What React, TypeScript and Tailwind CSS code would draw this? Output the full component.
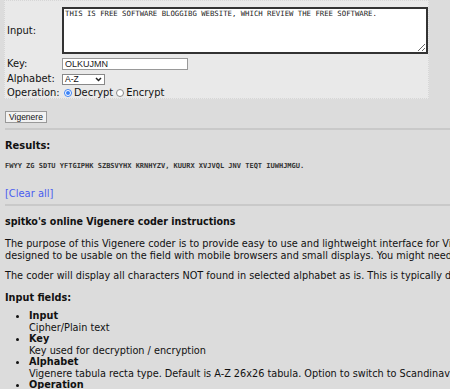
export default function App() {
  return (
    <div className="h-[389px] w-[450px] overflow-hidden bg-[#dcdcdc] text-[#111] font-['DejaVu_Sans_Condensed','DejaVu_Sans',Verdana,sans-serif] text-[10.8px] leading-[11.5px]">
      <div className="px-[4px]">
        {/* Form */}
        <div className="h-[99px] w-[425px] border border-dotted border-[#d6d6d6] bg-[#e9e9e9] pl-[2px] text-[11px] leading-[12px]">
          <div className="mt-[6px] flex items-center">
            <span className="w-[55px]">Input:</span>
            <textarea
              readOnly
              className="h-[47px] w-[366px] resize-y border-2 border-[#333] bg-white px-[1px] py-0 font-['DejaVu_Sans_Mono',monospace] text-[7.3px] leading-[9px] text-[#222] outline-none"
              defaultValue="THIS IS FREE SOFTWARE BLOGGIBG WEBSITE, WHICH REVIEW THE FREE SOFTWARE."
            />
          </div>
          <div className="mt-[4px] flex items-center">
            <span className="w-[55px]">Key:</span>
            <input
              readOnly
              defaultValue="OLKUJMN"
              className="h-[12px] w-[126px] border border-[#999] bg-white px-[2px] font-['Liberation_Sans',Arial,sans-serif] text-[9px] text-[#222] outline-none"
            />
          </div>
          <div className="mt-[3px] flex items-center">
            <span className="w-[55px]">Alphabet:</span>
            <div className="flex h-[11px] w-[43px] items-center justify-between border border-[#888] bg-white px-[2px] font-['Liberation_Sans',Arial,sans-serif] text-[8.5px] leading-[9px]">
              <span>A-Z</span>
              <svg width="7" height="5" viewBox="0 0 7 5">
                <path d="M1 1l2.5 2.5L6 1" stroke="#222" strokeWidth="1.5" fill="none" />
              </svg>
            </div>
          </div>
          <div className="mt-[2px] flex items-center">
            <span className="w-[57px]">Operation:</span>
            <span className="mr-[2px] inline-block h-[8px] w-[8px] rounded-full border border-[#3b82f6] bg-white p-[1px]">
              <span className="block h-full w-full rounded-full bg-[#3b82f6]" />
            </span>
            <span>Decrypt</span>
            <span className="ml-[3px] mr-[2px] inline-block h-[8px] w-[8px] rounded-full border border-[#888] bg-white" />
            <span>Encrypt</span>
          </div>
        </div>

        <button className="mt-[12px] ml-[1px] h-[12px] border border-[#999] bg-[#f2f2f2] px-[3px] font-['Liberation_Sans',Arial,sans-serif] text-[8.5px] leading-[10px] text-[#111]">
          Vigenere
        </button>
      </div>

      <hr className="ml-[5px] mt-[5px] border-t-2 border-[#c9c9c9]" />

      <div className="px-[5px]">
        <div className="mt-[9px] text-[11px] leading-[13px] font-bold">Results:</div>
        <div className="mt-[10px] font-['DejaVu_Sans_Mono',monospace] text-[7px] leading-[9px] font-bold text-[#333]">
          FWYY ZG SDTU YFTGIPHK SZBSVYHX KRNHYZV, KUURX XVJVQL JNV TEQT IUWHJMGU.
        </div>
        <div className="mt-[16px] text-[11px] leading-[13px] text-[#4a5cf0]">[Clear all]</div>
      </div>

      <hr className="ml-[5px] mt-[4px] border-t-2 border-[#c9c9c9]" />

      <div className="px-[5px] whitespace-nowrap">
        <div className="mt-[9px] text-[10.6px] leading-[13px] font-bold">spitko's online Vigenere coder instructions</div>
        <p className="mt-[10px]">
          The purpose of this Vigenere coder is to provide easy to use and lightweight interface for Vigenere
          <br />
          designed to be usable on the field with mobile browsers and small displays. You might need
        </p>
        <p className="mt-[9px]">
          The coder will display all characters NOT found in selected alphabet as is. This is typically done
        </p>
        <div className="mt-[10px] font-bold">Input fields:</div>
        <ul className="mt-[7px] list-disc pl-[24px]">
          <li>
            <b>Input</b>
            <br />
            Cipher/Plain text
          </li>
          <li>
            <b>Key</b>
            <br />
            Key used for decryption / encryption
          </li>
          <li>
            <b>Alphabet</b>
            <br />
            Vigenere tabula recta type. Default is A-Z 26x26 tabula. Option to switch to Scandinavian
          </li>
          <li>
            <b>Operation</b>
          </li>
        </ul>
      </div>
    </div>
  );
}
